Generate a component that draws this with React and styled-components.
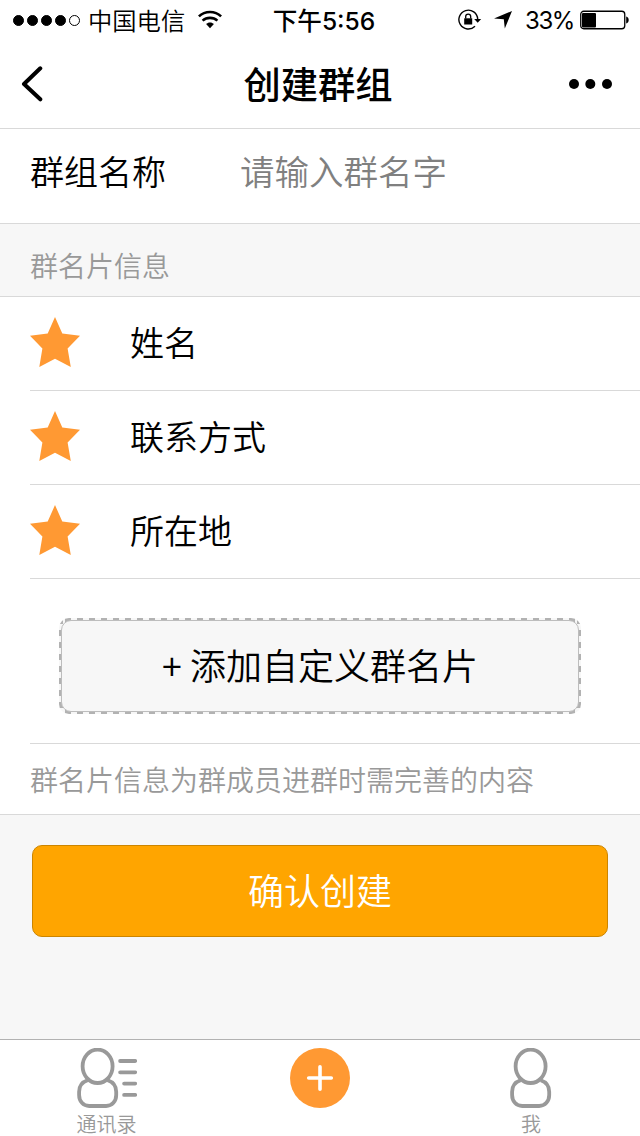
import React from "react";
import styled, { createGlobalStyle } from "styled-components";

const GlobalStyle = createGlobalStyle`
  * { box-sizing: border-box; }
  body {
    margin: 0;
    background: #f7f7f7;
    color: #000;
    font-family: "Noto Sans CJK SC", sans-serif;
    font-weight: 350;
  }
  button, input { font-family: inherit; font-weight: inherit; color: inherit; }
`;

const Screen = styled.div`
  width: 640px;
  height: 1136px;
  display: flex;
  flex-direction: column;
  background: #f7f7f7;
`;

const StatusBar = styled.header`
  height: 40px;
  flex: none;
  display: grid;
  grid-template-columns: 1fr auto 1fr;
  align-items: center;
  padding: 0 11px 0 13px;
  background: #fff;
  font-size: 24px;
  line-height: 36px;
`;

const StatusGroup = styled.div`
  display: flex;
  align-items: center;
  justify-content: ${(p) => (p.$end ? "flex-end" : "flex-start")};
`;

const Signal = styled.div`
  display: flex;
  gap: 3px;
  margin-right: 8px;
`;

const SignalDot = styled.i`
  width: 11px;
  height: 11px;
  border-radius: 50%;
  border: 1px solid #000;
  background: ${(p) => (p.$on ? "#000" : "#fff")};
`;

const Carrier = styled.span`
  margin-right: 12px;
  font-size: 24.3px;
`;

const Time = styled.span`
  padding: 2px 0 0 6px;
  font-weight: 500;
  font-family: Inter, "Noto Sans CJK SC", sans-serif;
  font-size: 24.6px;
`;

const LocationSlot = styled.span`
  display: flex;
  margin-left: 12px;
`;

const Percent = styled.span`
  padding-top: 2px;
  font-family: Inter, sans-serif;
  font-weight: 400;
  font-size: 24px;
  margin: 0 6px 0 13px;
  letter-spacing: -1.4px;
`;

const NavBar = styled.nav`
  height: 89px;
  flex: none;
  display: flex;
  align-items: center;
  justify-content: space-between;
  padding: 0 27px 0 21px;
  background: #fff;
  border-bottom: 1px solid #d9d9d9;
`;

const NavButton = styled.button`
  display: flex;
  width: 46px;
  padding: 0;
  border: 0;
  background: none;
  justify-content: ${(p) => (p.$end ? "flex-end" : "flex-start")};
`;

const Title = styled.h1`
  margin: 0;
  padding: 0 0 2px 2px;
  font-size: 37.3px;
  line-height: 56px;
  font-weight: 500;
`;

const NameRow = styled.label`
  height: 95px;
  flex: none;
  display: flex;
  padding: 17px 30px 0;
  background: #fff;
  border-bottom: 1px solid #d9d9d9;
  font-size: 34px;
  line-height: 50px;
`;

const NameLabel = styled.span`
  width: 210px;
`;

const NameInput = styled.input`
  flex: 1;
  height: 50px;
  min-width: 0;
  padding: 0 0 2px;
  border: 0;
  outline: 0;
  background: none;
  font-size: 34.5px;
  &::placeholder { color: #808080; opacity: 1; }
`;

const SectionHeading = styled.h2`
  margin: 0;
  height: 73px;
  flex: none;
  padding: 21px 30px 0;
  border-bottom: 1px solid #d9d9d9;
  color: #999;
  font-size: 28px;
  line-height: 40px;
  font-weight: inherit;
`;

const Panel = styled.section`
  flex: none;
  background: #fff;
  border-bottom: 1px solid #d9d9d9;
`;

const FieldRow = styled.div`
  height: 94px;
  margin-left: 30px;
  padding-bottom: 3px;
  display: flex;
  align-items: center;
  gap: 50px;
  border-bottom: 1px solid #d9d9d9;
  font-size: 34px;
  line-height: 50px;
`;

const AddArea = styled.div`
  height: 165px;
  margin-left: 30px;
  padding: 39px 59px 0 29px;
  border-bottom: 1px solid #d9d9d9;
`;

const DashedFrame = styled.div`
  height: 96px;
  padding: 2px;
  border-radius: 10px;
  background:
    repeating-linear-gradient(90deg, transparent 0 6px, #b2b2b2 6px 12px) 0 0 / 100% 4px no-repeat,
    repeating-linear-gradient(90deg, transparent 0 6px, #b2b2b2 6px 12px) 0 100% / 100% 4px no-repeat,
    repeating-linear-gradient(#b2b2b2 0 6px, transparent 6px 12px) 0 0 / 4px 100% no-repeat,
    repeating-linear-gradient(#b2b2b2 0 6px, transparent 6px 12px) 100% 0 / 4px 100% no-repeat,
    #f7f7f7;
`;

const AddButton = styled.button`
  width: 100%;
  height: 92px;
  display: flex;
  align-items: center;
  justify-content: center;
  padding: 0 0 4px;
  border: 1px solid #bdbdbd;
  border-radius: 10px;
  background: #f7f7f7;
  font-size: 36px;
  line-height: 52px;
`;

const Hint = styled.p`
  margin: 0;
  height: 70px;
  padding: 15px 30px 0;
  color: #999;
  font-size: 28px;
  line-height: 40px;
`;

const ConfirmArea = styled.div`
  flex: 1;
  padding: 30px 32px;
`;

const ConfirmButton = styled.button`
  width: 100%;
  height: 92px;
  padding: 0 0 4px;
  border: 1px solid #cc8500;
  border-radius: 10px;
  background: #ffa500;
  color: #fff;
  font-size: 36px;
  line-height: 52px;
`;

const TabBar = styled.nav`
  height: 97px;
  flex: none;
  display: grid;
  grid-template-columns: 213px 214px 208px;
  background: #fff;
  border-top: 1px solid #b2b2b2;
`;

const Tab = styled.a`
  display: flex;
  flex-direction: column;
  align-items: center;
  gap: 4px;
  padding-top: 8px;
  color: #999;
  font-size: 20px;
  line-height: 24px;
  svg { display: block; flex: none; }
`;

const WifiIcon = () => (
  <svg width="26" height="20" viewBox="0 0 24 20" fill="none" stroke="#000" strokeWidth="2.6">
    <path d="M0.9 6.4C7 .6 17 .6 23.1 6.4" />
    <path d="M4.6 10.6C8.7 6.9 15.3 6.9 19.4 10.6" />
    <path d="M8.1 14.1C10 11.9 14 11.9 15.9 14.1L12 18.3Z" fill="#000" stroke="none" />
  </svg>
);

const RotationLockIcon = () => (
  <svg width="24" height="22" viewBox="0 0 24 22" fill="none" stroke="#000">
    <path d="M17 17.2A9.4 9.4 0 1 1 19.7 10.2" strokeWidth="1.4" />
    <path d="M16.2 10H23.2L19.7 13.8Z" fill="#000" stroke="none" />
    <rect x="6.2" y="9.3" width="8" height="6.2" fill="#000" stroke="none" />
    <path d="M7.7 9.5V7.6a2.5 2.5 0 0 1 5 0V9.5" strokeWidth="1.3" />
  </svg>
);

const LocationIcon = () => (
  <svg width="18" height="18" viewBox="0 0 18 18">
    <path d="M18 0L10.8 17.6L9.8 8.3L0 7.4Z" />
  </svg>
);

const BatteryIcon = () => (
  <svg width="49" height="20" viewBox="0 0 49 20" fill="none">
    <rect x="0.75" y="1.25" width="44" height="17.5" rx="3" stroke="#000" strokeWidth="1.3" />
    <rect x="2" y="3" width="14" height="14.5" rx="1" fill="#000" />
    <path d="M46.2 6.5C49.5 7 49.5 13 46.2 13.5Z" fill="#000" />
  </svg>
);

const BackIcon = () => (
  <svg width="22" height="36" viewBox="0 0 22 36" fill="none" stroke="#000" strokeWidth="4" strokeLinecap="round" strokeLinejoin="round">
    <path d="M19.3 2.3L3 18L19.3 33.3" />
  </svg>
);

const MoreIcon = () => (
  <svg width="44" height="10" viewBox="0 0 44 10">
    <circle cx="5" cy="5" r="5" />
    <circle cx="21.3" cy="5" r="5" />
    <circle cx="38" cy="5" r="5" />
  </svg>
);

const StarIcon = () => (
  <svg width="50" height="50" viewBox="0 0 50 50" fill="#ff9933">
    <path d="M25 0L32.3 16.6L50 18.7L37.6 31.6L40.8 50L25 41.8L9.3 50L12.4 31.6L0 18.7L17.7 16.6Z" />
  </svg>
);

const Person = () => (
  <>
    <path d="M10.6 32.3C5.5 34 2.1 38.3 2.1 43.8V47C2.1 53.2 6.2 58 12.2 58H29.1C35.1 58 39.2 53.2 39.2 47V43.8C39.2 38.3 35.8 34 30.7 32.3" />
    <ellipse cx="20.6" cy="18.3" rx="15" ry="16.7" />
  </>
);

const ContactsIcon = () => (
  <svg width="60" height="60" viewBox="0 0 60 60" fill="none" stroke="#999" strokeWidth="3.8" strokeLinecap="round">
    <Person />
    <path d="M43.1 13H58.2M43.1 24.3H58.2M47.1 35.6H58.2M47.1 46.9H58.2" />
  </svg>
);

const MeIcon = () => (
  <svg width="42" height="60" viewBox="0 0 42 60" fill="none" stroke="#999" strokeWidth="3.8">
    <Person />
  </svg>
);

const PlusIcon = () => (
  <svg width="60" height="60" viewBox="0 0 60 60">
    <circle cx="30" cy="30" r="30" fill="#ff9933" />
    <path d="M18.7 30H41.3M30 18.7V41.3" stroke="#fff" strokeWidth="3.6" strokeLinecap="round" />
  </svg>
);

const fields = ["姓名", "联系方式", "所在地"];

export default function App() {
  return (
    <Screen>
      <GlobalStyle />
      <StatusBar>
        <StatusGroup>
          <Signal>
            {[1, 1, 1, 1, 0].map((on, i) => (
              <SignalDot key={i} $on={on} />
            ))}
          </Signal>
          <Carrier>中国电信</Carrier>
          <WifiIcon />
        </StatusGroup>
        <Time>下午5:56</Time>
        <StatusGroup $end>
          <RotationLockIcon />
          <LocationSlot>
            <LocationIcon />
          </LocationSlot>
          <Percent>33%</Percent>
          <BatteryIcon />
        </StatusGroup>
      </StatusBar>
      <NavBar>
        <NavButton aria-label="返回">
          <BackIcon />
        </NavButton>
        <Title>创建群组</Title>
        <NavButton $end aria-label="更多">
          <MoreIcon />
        </NavButton>
      </NavBar>
      <NameRow>
        <NameLabel>群组名称</NameLabel>
        <NameInput placeholder="请输入群名字" />
      </NameRow>
      <SectionHeading>群名片信息</SectionHeading>
      <Panel>
        {fields.map((name) => (
          <FieldRow key={name}>
            <StarIcon />
            <span>{name}</span>
          </FieldRow>
        ))}
        <AddArea>
          <DashedFrame>
            <AddButton>+ 添加自定义群名片</AddButton>
          </DashedFrame>
        </AddArea>
        <Hint>群名片信息为群成员进群时需完善的内容</Hint>
      </Panel>
      <ConfirmArea>
        <ConfirmButton>确认创建</ConfirmButton>
      </ConfirmArea>
      <TabBar>
        <Tab>
          <ContactsIcon />
          通讯录
        </Tab>
        <Tab>
          <PlusIcon />
        </Tab>
        <Tab>
          <MeIcon />我
        </Tab>
      </TabBar>
    </Screen>
  );
}
